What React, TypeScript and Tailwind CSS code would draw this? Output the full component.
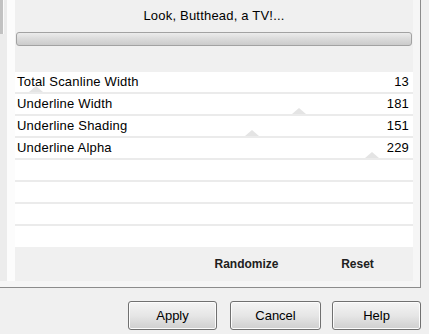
import React from 'react';

interface Param {
  label: string;
  value: number;
  thumb: number; // x of slider thumb inside the row
}

const params: Param[] = [
  { label: 'Total Scanline Width', value: 13, thumb: 14 },
  { label: 'Underline Width', value: 181, thumb: 277 },
  { label: 'Underline Shading', value: 151, thumb: 230 },
  { label: 'Underline Alpha', value: 229, thumb: 350 },
];

const font = { fontFamily: '"Liberation Sans", Arial, sans-serif' };

const ParamRow: React.FC<{ param?: Param; last?: boolean }> = ({ param, last }) => (
  <div className={`relative bg-white ${last ? 'h-[21px]' : 'h-[22px] border-b-2 border-[#ebebeb]'}`}>
    {param && (
      <>
        {/* faint slider thumb */}
        <div
          className="absolute bottom-0 w-0 h-0 border-l-[7px] border-r-[7px] border-b-[6px] border-l-transparent border-r-transparent border-b-[#e4e4e4]"
          style={{ left: param.thumb }}
        />
        <div className="relative flex items-center justify-between h-full pl-[2px] pr-[4px] text-[13px] tracking-[0.2px] text-black">
          <span>{param.label}</span>
          <span>{param.value}</span>
        </div>
      </>
    )}
  </div>
);

const DialogButton: React.FC<{ label: string; width: string; className?: string }> = ({ label, width, className }) => (
  <button
    type="button"
    className={`${width} ${className ?? ''} h-[29px] rounded-[3px] border border-[#707070] bg-gradient-to-b from-[#f4f4f4] via-[#e6e6e6] to-[#cfcfcf] shadow-[inset_0_0_0_1px_#fcfcfc] text-[13px] text-black`}
  >
    {label}
  </button>
);

const App: React.FC = () => {
  return (
    <div className="w-[429px] h-[334px] bg-[#f0f0f0] flex flex-col overflow-hidden" style={font}>
      {/* Settings box */}
      <div className="w-[421px] h-[288px] flex border-r border-b border-[#8c8c8c] bg-[#f6f6f6]">
        {/* left scroll strip */}
        <div className="w-[7px] h-[281px] bg-[#ececec] flex">
          <div className="w-[4px] h-[34px] bg-[#c2c2c2] border-r border-[#fafafa]" />
        </div>
        <div className="w-[8px] h-[281px] bg-[#fcfcfc]" />

        {/* main panel */}
        <div className="w-[398px] h-[281px] bg-[#f0f0f0] flex flex-col">
          <div className="pt-[8px] h-[24px] text-center text-[13px] tracking-[0.2px] leading-[16px] text-black">
            Look, Butthead, a TV!...
          </div>
          <div className="mt-[8px] mx-px h-[14px] rounded-[3px] border border-[#a2a2a2] bg-gradient-to-b from-[#ececec] via-[#dadada] to-[#cbcbcb]" />

          <div className="mt-[26px] flex flex-col">
            {params.map((p) => (
              <ParamRow key={p.label} param={p} />
            ))}
            <ParamRow />
            <ParamRow />
            <ParamRow />
            <ParamRow last />
          </div>

          <div className="flex-1 flex justify-end text-[12px] font-bold text-[#202020]">
            <div className="w-[111px] flex items-center justify-center">Randomize</div>
            <div className="w-[111px] flex items-center justify-center">Reset</div>
          </div>
        </div>
      </div>

      {/* dialog buttons */}
      <div className="flex-1 flex items-start pt-[13px] pl-[128px]">
        <DialogButton label="Apply" width="w-[89px]" />
        <DialogButton label="Cancel" width="w-[91px]" className="ml-[13px]" />
        <DialogButton label="Help" width="w-[89px]" className="ml-[11px]" />
      </div>
    </div>
  );
};

export default App;
